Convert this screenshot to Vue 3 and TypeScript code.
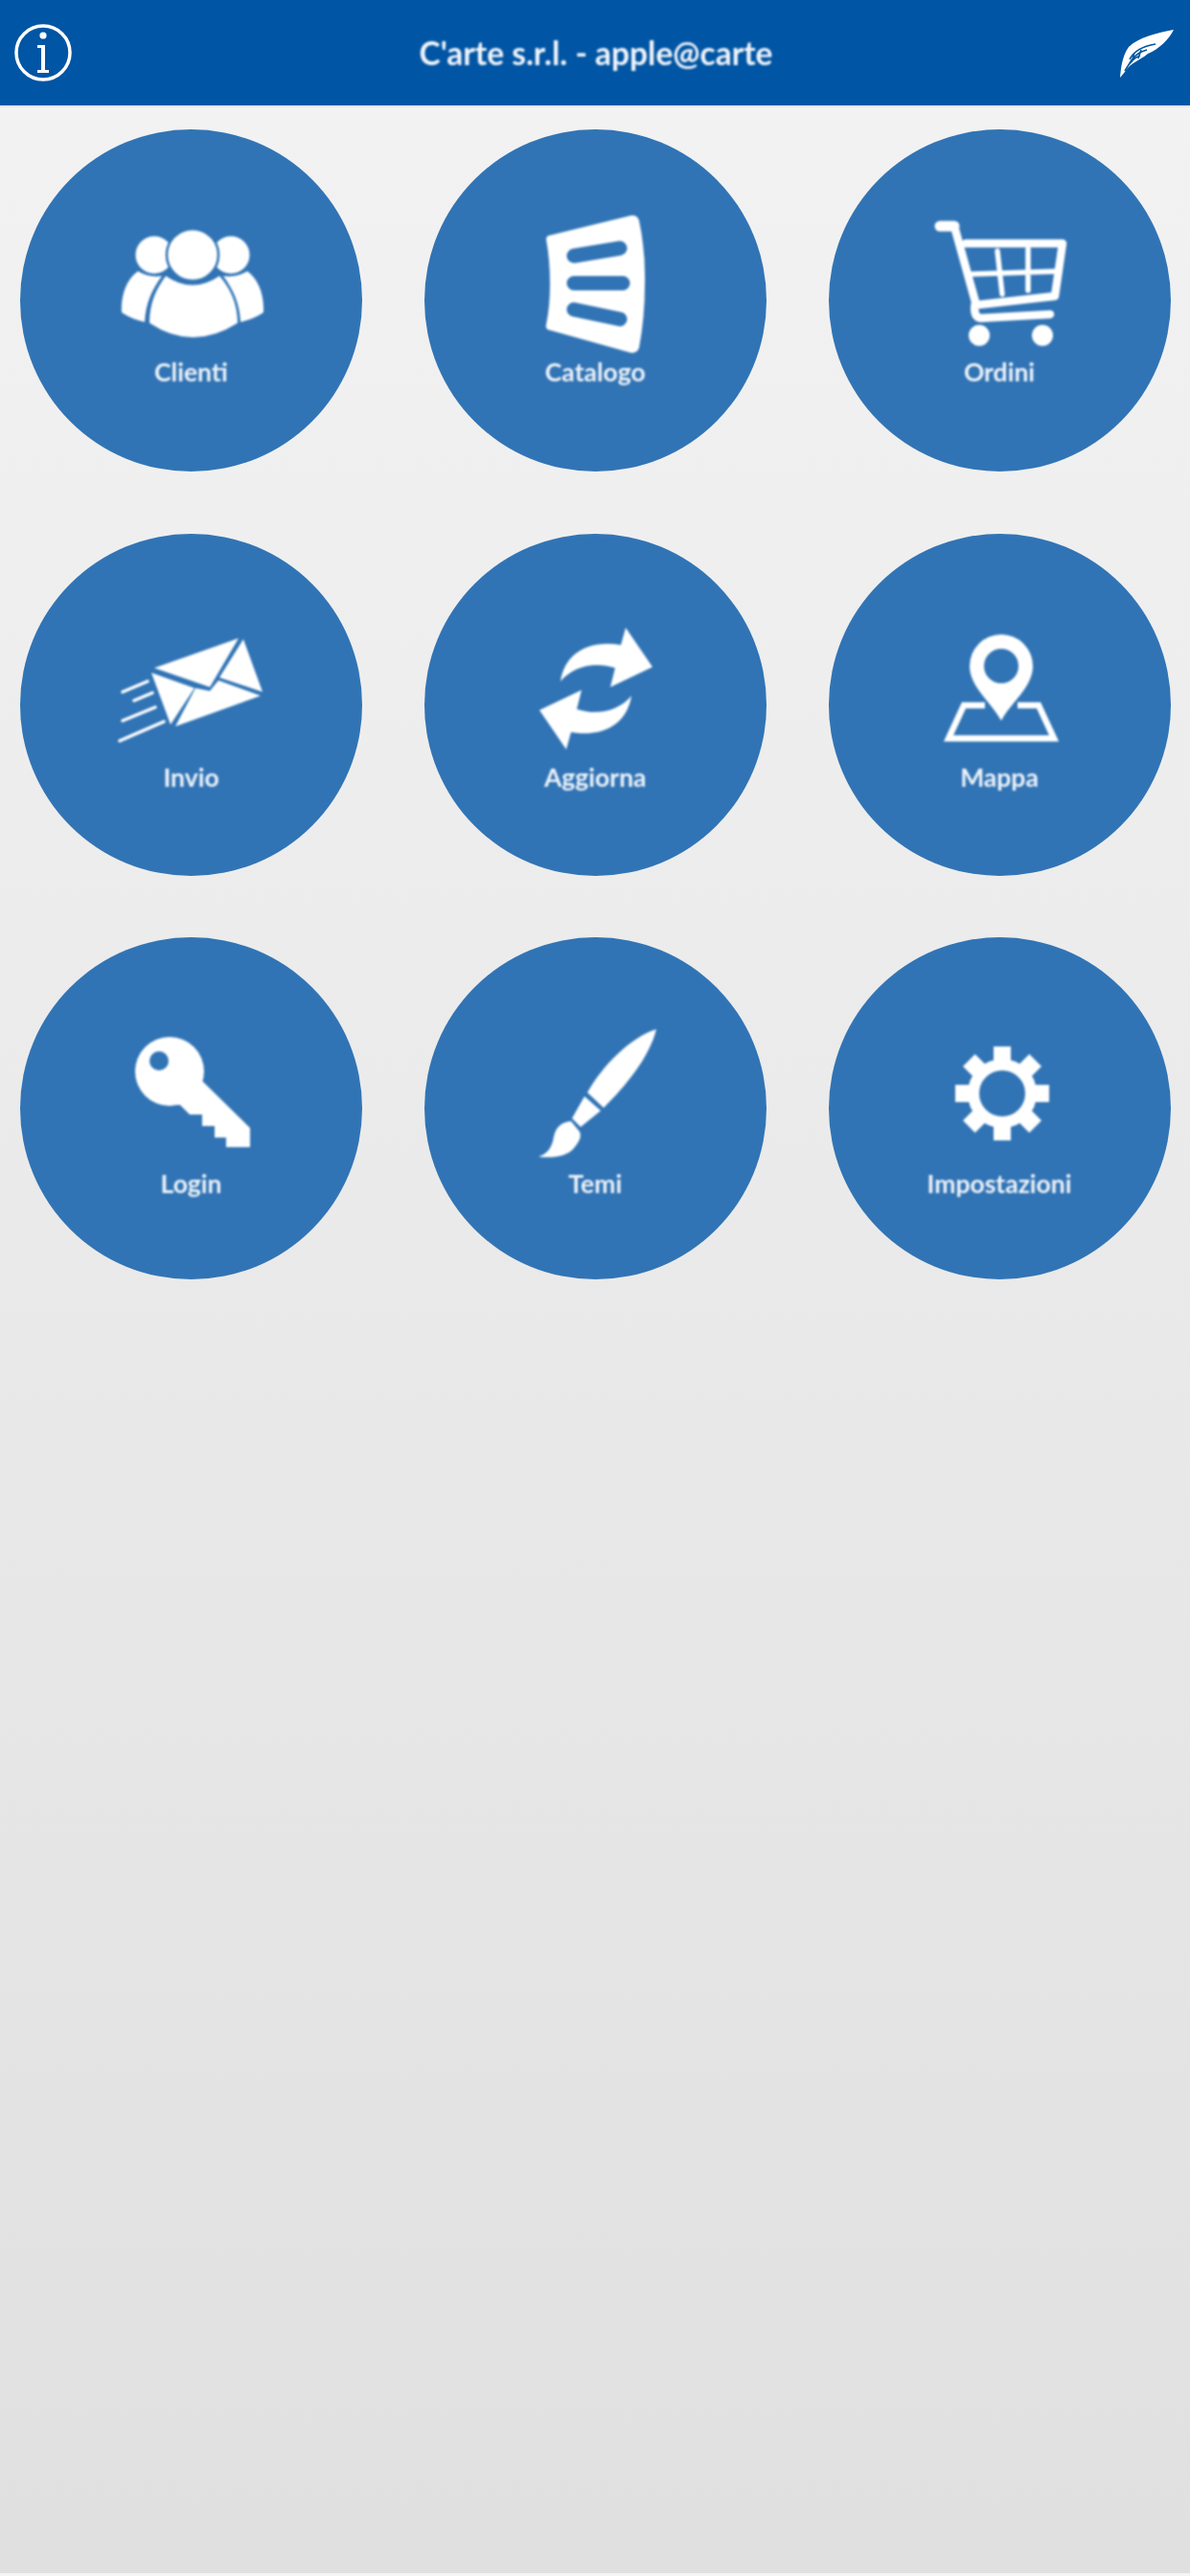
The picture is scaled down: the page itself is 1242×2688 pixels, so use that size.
<script setup lang="ts">
const tiles = [
  { id: 'clienti', label: 'Clienti' },
  { id: 'catalogo', label: 'Catalogo' },
  { id: 'ordini', label: 'Ordini' },
  { id: 'invio', label: 'Invio' },
  { id: 'aggiorna', label: 'Aggiorna' },
  { id: 'mappa', label: 'Mappa' },
  { id: 'login', label: 'Login' },
  { id: 'temi', label: 'Temi' },
  { id: 'impostazioni', label: 'Impostazioni' },
];

const blue = '#3174b5';
</script>

<template>
  <div class="page">
    <header class="topbar">
      <svg class="info" viewBox="0 0 64 64" width="64" height="64">
        <circle cx="32" cy="32" r="28" fill="none" stroke="#fff" stroke-width="3.5" />
        <circle cx="32" cy="14" r="3.6" fill="#fff" />
        <path d="M26 24H34V50H38V53H26V50H30V27H26Z" fill="#fff" />
      </svg>
      <h1 class="title">C'arte s.r.l. - apple@carte</h1>
      <svg class="feather" viewBox="0 0 64 64" width="64" height="64">
        <path
          d="M61 8C44 11 24 16 14 26C7 36 6 48 5 58L10 52C16 42 26 40 34 33C46 28 56 18 61 8Z"
          fill="#fff"
        />
        <path
          d="M42 23C30 25 20 29 15 39M33 29C25 31 18 36 13 46M26 35C20 37 15 42 10 51M20 32L17 42M27 29L24 38"
          fill="none"
          stroke="#0055a4"
          stroke-width="1.6"
        />
      </svg>
    </header>

    <main class="tiles">
      <button v-for="t in tiles" :key="t.id" class="tile" type="button">
        <svg class="icon" viewBox="78 80 200 156" width="200" height="156">
          <g v-if="t.id === 'clienti'" fill="#fff">
            <circle cx="139" cy="131" r="19.5" />
            <circle cx="219" cy="131" r="19.5" />
            <path d="M105 191C104 170 112 155 122 148Q133 155 147 153C136 168 130 182 129 201Q115 198 105 191Z" />
            <path d="M253 191C254 170 246 155 236 148Q225 155 211 153C222 168 228 182 229 201Q243 198 253 191Z" />
            <path d="M134 202C134 180 142 165 151 153Q179 172 207 153C218 165 226 182 226 202Q179 232 134 202Z" />
            <circle cx="179" cy="131" r="27" :stroke="blue" stroke-width="2.5" />
          </g>

          <g v-else-if="t.id === 'catalogo'">
            <path
              d="M129 111L215 90Q222 89 224 95Q231 128 230 162Q230 196 224 228Q222 234 215 233L129 209Q126 207 127 204Q131 185 131 162Q131 135 127 115Q127 112 129 111Z"
              fill="#fff"
            />
            <path d="M156 132L204 124M156 160.5H207M156 188L204 198" fill="none" :stroke="blue" stroke-width="15" stroke-linecap="round" />
          </g>

          <g v-else-if="t.id === 'ordini'" fill="none" stroke="#fff" stroke-linecap="round" stroke-linejoin="round">
            <path d="M116 101H131" stroke-width="11" />
            <path d="M131 101L153 180Q150 195 158 197L231 193" stroke-width="8.5" />
            <path d="M143 119H244L236 174L156 183" stroke-width="8.5" />
            <path d="M176 127L181 172M208 125V168M150 151L241 148" stroke-width="5.5" />
            <circle cx="157" cy="215" r="11" fill="#fff" stroke="none" />
            <circle cx="223" cy="215" r="11" fill="#fff" stroke="none" />
          </g>

          <g v-else-if="t.id === 'invio'">
            <path d="M139 140L227 109L197 160Z" fill="#fff" />
            <path d="M136 145L181 161L156 199Z" fill="#fff" />
            <path d="M232 110L252 165L207 150Z" fill="#fff" />
            <path d="M182 161L197 164L206 153L250 169L161 201Z" fill="#fff" />
            <path d="M106 165L132 154M118 174L137 166M106 195L140 181M103 216L149 196" fill="none" stroke="#fff" stroke-width="3.5" stroke-linecap="round" />
          </g>

          <g v-else-if="t.id === 'aggiorna'" fill="#fff">
            <path d="M142 154C146 126 170 110 205 116L210 98L238 139L194 160L199 140C178 133 155 138 142 154Z" />
            <path d="M142 154C146 126 170 110 205 116L210 98L238 139L194 160L199 140C178 133 155 138 142 154Z" transform="rotate(180 179 161.5)" />
          </g>

          <g v-else-if="t.id === 'mappa'">
            <path
              d="M180 195C170 176 147 160 147 138A33 33 0 0 1 213 138C213 160 190 176 180 195ZM180 120A18 18 0 1 0 180 156A18 18 0 1 0 180 120Z"
              fill="#fff"
              fill-rule="evenodd"
            />
            <path d="M163 179H141L125 213.5H235L219 179H197" fill="none" stroke="#fff" stroke-width="6.5" />
          </g>

          <g v-else-if="t.id === 'login'">
            <circle cx="155" cy="140" r="36" fill="#fff" />
            <path d="M160 155L185 146L239 199V219H214V209H202V197H189V185H176L166 175H150Z" fill="#fff" />
            <circle cx="144" cy="129" r="10" :fill="blue" />
          </g>

          <g v-else-if="t.id === 'temi'" fill="#fff">
            <path d="M242 96C215 104 185 135 170 162L187 178C210 155 235 125 242 96Z" />
            <path d="M167 166L184 181L163 198L154 189Z" />
            <path d="M153 192C143 193 137 198 135 208C133 220 128 226 119 229C135 231 150 228 156 220C162 213 164 208 162 203Z" />
          </g>

          <g v-else-if="t.id === 'impostazioni'">
            <g stroke="#fff" stroke-width="18">
              <path d="M181 114V212" />
              <path d="M181 114V212" transform="rotate(45 181 163)" />
              <path d="M181 114V212" transform="rotate(90 181 163)" />
              <path d="M181 114V212" transform="rotate(135 181 163)" />
            </g>
            <circle cx="181" cy="163" r="30" :fill="blue" stroke="#fff" stroke-width="12" />
          </g>
        </svg>
        <span class="label">{{ t.label }}</span>
      </button>
    </main>
  </div>
</template>

<style scoped>
.page {
  height: 2685px;
  background: linear-gradient(#f3f3f3, #e0e0e0);
  font-family: Lato, 'Open Sans', sans-serif;
}

.topbar {
  height: 110px;
  box-sizing: content-box;
  padding: 0 14px 0 13px;
  display: flex;
  align-items: center;
  justify-content: space-between;
  background: #0055a4;
  border-bottom: 2px solid #dfe6ee;
  color: #fff;
}

.info,
.feather {
  filter: blur(0.7px);
  flex: none;
}

.title {
  margin: 0 0 0 3px;
  font-size: 33.5px;
  font-weight: 700;
  line-height: 40px;
  color: #f2f5fa;
  filter: blur(0.9px);
}

.tiles {
  display: grid;
  grid-template-columns: repeat(3, 357px);
  justify-content: space-between;
  row-gap: 64.5px;
  padding: 23px 20.5px 0 21px;
}

.tile {
  width: 357px;
  height: 357px;
  padding: 80px 0 0;
  border: 0;
  border-radius: 50%;
  background: #3174b5;
  display: flex;
  flex-direction: column;
  align-items: center;
  font-family: inherit;
}

.tile:nth-child(n + 4) .label {
  margin-top: 1px;
}

.tile:nth-child(n + 7) .label {
  margin-top: 4px;
}

.icon {
  display: block;
  flex: none;
  filter: blur(0.8px);
}

.label {
  font-size: 26.5px;
  font-weight: 700;
  line-height: 34px;
  color: #eef3f9;
  filter: blur(0.9px);
}
</style>

<style>
html,
body {
  background: #f5f5f5;
}
</style>
